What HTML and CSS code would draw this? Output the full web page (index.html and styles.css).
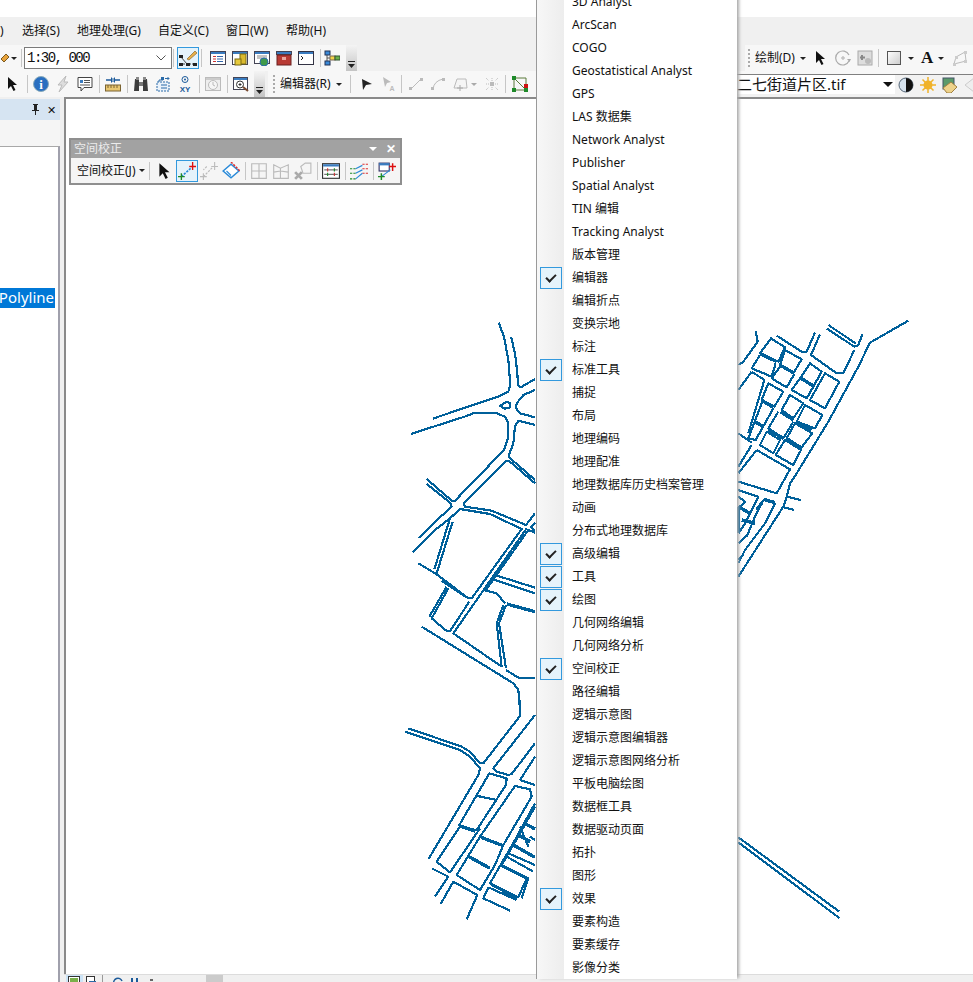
FILE: index.html
```html
<!DOCTYPE html>
<html lang="zh">
<head>
<meta charset="utf-8">
<title>ArcMap</title>
<link rel="stylesheet" href="styles.css">
</head>
<body>
<div class="app">
  <div class="topstrip"></div>
  <nav class="menubar">
    <span class="m0">)</span><span class="m1">选择(S)</span><span class="m2">地理处理(G)</span><span class="m3">自定义(C)</span><span class="m4">窗口(W)</span><span class="m5">帮助(H)</span>
  </nav>

  <div class="band">
    <div class="group g1">
      <svg class="ic cut" viewBox="6 0 11 16"><path d="M7 9l5-5 3 3-5 5z" fill="#e8a33c" stroke="#7a5a20"/></svg>
      <i class="caret c-a"></i>
      <i class="sep s-a"></i>
      <div class="combo scale"><span>1:30, 000</span><svg viewBox="0 0 10 6" class="chev"><path d="M.5.5L5 5 9.500.5" fill="none" stroke="#555"/></svg></div>
      <i class="sep s-b"></i>
      <span class="btn on"><svg class="ic big" viewBox="0 0 20 20"><path d="M2 16h16" stroke="#444" stroke-dasharray="2 1"/><path d="M3 9l6 7" stroke="#444"/><rect x="1" y="7" width="4" height="3" fill="#222"/><rect x="1" y="15" width="4" height="3" fill="#222"/><rect x="8" y="15" width="4" height="3" fill="#222"/><rect x="15" y="15" width="4" height="3" fill="#222"/><path d="M9 11l8-8 2 2-8 7z" fill="#e8b04a" stroke="#8a6a30" stroke-width=".7"/></svg></span>
      <i class="sep s-c"></i>
      <span class="btn"><svg class="ic" viewBox="0 0 16 16"><rect x=".5" y="1.500" width="15" height="13" fill="#fff" stroke="#445"/><rect x="1" y="2" width="14" height="2" fill="#3a7cc0"/><path d="M3 6.500h3M3 9h3M3 11.500h3" stroke="#c33"/><path d="M7 6.500h6M7 9h6M7 11.500h6" stroke="#36a"/></svg></span>
      <span class="btn"><svg class="ic" viewBox="0 0 16 16"><rect x=".5" y="1.500" width="15" height="13" fill="#fff" stroke="#445"/><rect x="1" y="2" width="14" height="2" fill="#3a7cc0"/><rect x="8" y="4" width="6" height="10" fill="#d9b92e" stroke="#7a6a10"/><rect x="3" y="9" width="6" height="6" fill="#e6c93c" stroke="#7a6a10"/></svg></span>
      <span class="btn"><svg class="ic" viewBox="0 0 16 16"><rect x=".5" y="1.500" width="15" height="12" fill="#fff" stroke="#445"/><rect x="1" y="2" width="14" height="2" fill="#3a7cc0"/><path d="M3 6h10M3 8h10" stroke="#888"/><circle cx="10" cy="12" r="4" fill="#3f9a4a" stroke="#2a6aa8"/></svg></span>
      <span class="btn"><svg class="ic" viewBox="0 0 16 16"><rect x=".5" y="1.500" width="15" height="3" fill="#3a7cc0" stroke="#445"/><rect x="1" y="5" width="14" height="10" fill="#b83a34" stroke="#6a2020"/><path d="M6 7h4v3H6z" fill="#e9a8a0"/></svg></span>
      <span class="btn"><svg class="ic" viewBox="0 0 16 16"><rect x=".5" y="1.500" width="15" height="13" fill="#fff" stroke="#334"/><rect x="1" y="2" width="14" height="2" fill="#3a7cc0"/><path d="M3 6l2 2-2 2" fill="none" stroke="#222"/></svg></span>
      <i class="sep s-d"></i>
      <span class="btn"><svg class="ic" viewBox="0 0 16 16"><path d="M3 4v9M3 8h6M11 8h2" stroke="#555"/><rect x="1" y="1" width="5" height="4" fill="#3a8ad8" stroke="#235"/><rect x="1" y="11" width="5" height="4" fill="#3a8ad8" stroke="#235"/><rect x="6" y="6" width="5" height="4" fill="#f3d34a" stroke="#765"/><rect x="11" y="6" width="5" height="4" fill="#6ab04a" stroke="#353"/></svg></span>
      <span class="more"><svg viewBox="0 0 7 7"><path d="M0 .5h7" stroke="#222"/><path d="M0 3h7L3.500 7z" fill="#222"/></svg></span>
    </div>
    <div class="group g2">
      <i class="grip"></i>
      <span class="lbl">绘制(D)</span><i class="caret c-b"></i>
      <span class="btn nar"><svg class="ic" viewBox="0 0 16 16"><path d="M3 1v12l3-3 2.500 5 2-1-2.500-5h4z" fill="#111"/></svg></span>
      <span class="btn nar"><svg class="ic" viewBox="0 0 16 16"><path d="M14 11A7 7 0 1 1 14 5" fill="none" stroke="#aaa" stroke-width="1.200"/><circle cx="8" cy="8" r="1.200" fill="none" stroke="#aaa"/><path d="M12 9l2.500 3 1.500-3z" fill="#aaa"/></svg></span>
      <span class="btn nar"><svg class="ic" viewBox="0 0 16 16"><rect x="1" y="1" width="14" height="14" fill="#ddd" stroke="#aaa"/><path d="M5 5v5M3 7.500h5" stroke="#888" stroke-width="2"/><circle cx="11" cy="11" r="3" fill="#bbb"/></svg></span>
      <i class="sep s-e"></i>
      <svg class="ic rect-ic" viewBox="0 0 14 14"><rect x=".5" y=".5" width="13" height="13" fill="url(#gr)" stroke="#555"/><defs><linearGradient id="gr" x2="1" y2="1"><stop offset="0" stop-color="#fff"/><stop offset="1" stop-color="#ccc"/></linearGradient></defs></svg>
      <i class="caret c-c"></i>
      <span class="bigA">A</span>
      <i class="caret c-d"></i>
      <svg class="ic poly-ic" viewBox="0 0 16 16"><path d="M2 14l2-7 9-5 1 9z" fill="none" stroke="#bbb"/><path d="M1 13h3v3H1zM3 6h3v3H3zM12 1h3v3h-3zM12 10h3v3h-3z" fill="#ccc"/></svg>
      <i class="sep s-h"></i>
    </div>
  </div>

  <div class="band">
    <div class="group g3">
      <span class="btn start"><svg class="ic" viewBox="0 0 16 16"><path d="M3 1v12l3-3 2.500 5 2-1-2.500-5h4z" fill="#111"/></svg></span>
      <i class="sep"></i>
      <span class="btn"><svg class="ic" viewBox="0 0 16 16"><circle cx="8" cy="8" r="7.500" fill="#2a6fc0" stroke="#8ab"/><text x="8" y="12.500" class="info">i</text></svg></span>
      <span class="btn"><svg class="ic" viewBox="0 0 16 16"><path d="M11 0L3 9h4l-3 7 9-10H9z" fill="#ddd" stroke="#bbb"/></svg></span>
      <span class="btn"><svg class="ic" viewBox="0 0 16 16"><path d="M1 1.500h14v10H7l-3 3.500v-3.500H1z" fill="#fff" stroke="#444"/><path d="M3 4h3v3H3z" fill="#3a7cc0"/><path d="M7 4.500h6M7 6.500h6M3 9h10" stroke="#555"/></svg></span>
      <i class="sep"></i>
      <span class="btn"><svg class="ic" viewBox="0 0 16 16"><path d="M1 4h5M10 4h5" stroke="#1c5a9a" stroke-width="1.500"/><path d="M6 1v6L9 4zM10 1v6L7 4z" fill="#1c5a9a"/><rect x=".5" y="9" width="15" height="6" fill="#e8c670" stroke="#7a6330"/><path d="M3 9v3M6 9v3M9 9v3M12 9v3" stroke="#7a6330"/></svg></span>
      <i class="sep"></i>
      <span class="btn"><svg class="ic" viewBox="0 0 16 16"><path d="M2 3h4v12H1zM10 3h4l1 12h-5z" fill="#3c3c3c"/><path d="M6 6h4v4H6z" fill="#777"/><rect x="3" y="1" width="3" height="3" fill="#888"/><rect x="10" y="1" width="3" height="3" fill="#888"/></svg></span>
      <span class="btn"><svg class="ic" viewBox="0 0 16 16"><path d="M8 4h-4v3M4 12h2" fill="none" stroke="#2a6aa8"/><rect x="6" y="1" width="3" height="3" fill="#2a6aa8"/><path d="M10 2.500h4l-1.500-1.500M14 2.500L12.500 4" fill="none" stroke="#2a6aa8"/><rect x="2" y="6" width="12" height="9" fill="#eaf2fa" stroke="#2a6aa8" stroke-dasharray="2 1"/><path d="M6 9h6M6 12h6" stroke="#2a6aa8"/></svg></span>
      <span class="btn"><svg class="ic" viewBox="0 0 16 16"><circle cx="8" cy="3.500" r="3" fill="none" stroke="#1c5a9a"/><circle cx="8" cy="3.500" r="1" fill="#1c5a9a"/><text x="8" y="15.500" class="xy">XY</text></svg></span>
      <i class="sep"></i>
      <span class="btn"><svg class="ic" viewBox="0 0 16 16"><rect x=".5" y="1.500" width="15" height="13" fill="#eee" stroke="#bbb"/><rect x="1" y="2" width="14" height="2" fill="#ccc"/><circle cx="8" cy="9" r="4.500" fill="#f5f5f5" stroke="#bbb"/><path d="M8 6v3l2 1" fill="none" stroke="#bbb"/></svg></span>
      <i class="sep"></i>
      <span class="btn"><svg class="ic" viewBox="0 0 16 16"><rect x=".5" y="1.500" width="14" height="12" fill="#fff" stroke="#445"/><rect x="1" y="2" width="13" height="2" fill="#3a7cc0"/><circle cx="7" cy="8.500" r="3.500" fill="#fff" stroke="#333"/><path d="M5.500 8.500h3M7 7v3" stroke="#333"/><path d="M10 11l5 4" stroke="#7a4a30" stroke-width="2"/></svg></span>
      <span class="more"><svg viewBox="0 0 7 7"><path d="M0 .5h7" stroke="#222"/><path d="M0 3h7L3.500 7z" fill="#222"/></svg></span>
    </div>
    <div class="group g4">
      <i class="grip"></i>
      <span class="lbl">编辑器(R)</span><i class="caret c-b"></i>
      <i class="sep s-f"></i>
      <span class="btn"><svg class="ic" viewBox="0 0 16 16"><path d="M4 3l10 5-6 1-3 5z" fill="#222"/></svg></span>
      <span class="btn"><svg class="ic" viewBox="0 0 16 16"><path d="M3 1l8 5-4 1-2 4z" fill="#bbb"/><text x="12" y="15" class="dimA">A</text></svg></span>
      <i class="sep"></i>
      <span class="btn"><svg class="ic" viewBox="0 0 16 16"><path d="M3 13L13 3" stroke="#bbb"/><rect x="1" y="11" width="3" height="3" fill="#bbb"/><rect x="12" y="2" width="3" height="3" fill="#bbb"/></svg></span>
      <span class="btn"><svg class="ic" viewBox="0 0 16 16"><path d="M3 13Q4 5 13 3" fill="none" stroke="#bbb"/><rect x="1" y="11" width="3" height="3" fill="#bbb"/><rect x="12" y="2" width="3" height="3" fill="#bbb"/></svg></span>
      <span class="btn"><svg class="ic" viewBox="0 0 16 16"><path d="M2 12l3-9h9l1 9z" fill="#f5f5f5" stroke="#bbb"/><path d="M8 9v6M5 12h6" stroke="#aaa"/></svg></span>
      <i class="caret dim"></i>
      <span class="btn"><svg class="ic" viewBox="0 0 16 16"><path d="M2 2l3 3M14 2l-3 3M2 14l3-3M14 14l-3-3M2 8h3M11 8h3M8 2v3M8 11v3" stroke="#bbb" stroke-dasharray="1 1"/><rect x="6" y="6" width="4" height="4" fill="#bbb"/></svg></span>
      <i class="sep"></i>
      <span class="btn"><svg class="ic" viewBox="0 0 16 16"><path d="M2 2v12h12zM2 2h12v12" fill="none" stroke="#5a7a3a"/><rect x="0" y="0" width="4" height="4" fill="#1f8a2a"/><rect x="0" y="12" width="4" height="4" fill="#1f8a2a"/><rect x="12" y="12" width="4" height="4" fill="#1f8a2a"/><rect x="12" y="8" width="4" height="4" fill="#c11"/></svg></span>
      <div class="geo">
        <div class="combo file"><span>二七街道片区.tif</span><i class="drop"></i></div>
        <span class="btn"><svg class="ic" viewBox="0 0 16 16"><circle cx="8" cy="8" r="7" fill="#d6e2ee" stroke="#567"/><path d="M8 1a7 7 0 0 1 0 14z" fill="#111"/></svg></span>
        <span class="btn"><svg class="ic" viewBox="0 0 16 16"><circle cx="8" cy="8" r="4.500" fill="#f0b32a"/><path d="M8 0v16M0 8h16M2.500 2.500l11 11M13.500 2.500l-11 11" stroke="#f0b32a" stroke-width="1.500"/></svg></span>
        <span class="btn"><svg class="ic" viewBox="0 0 16 16"><rect x="1" y="1" width="11" height="11" fill="#5a9a6a" stroke="#456"/><path d="M5 16l-4-5 8-6 6 5-6 6z" fill="#eed28a" stroke="#a08040"/></svg></span>
        <span class="btn"><svg class="ic" viewBox="0 0 16 16"><path d="M1 8l9-7v14z" fill="#eee" stroke="#ccc"/></svg></span>
      </div>
    </div>
  </div>

  <main class="main">
    <aside class="panel">
      <div class="p-head"><svg class="pin" viewBox="0 0 9 11"><path d="M2 0h5v1H6v5h2v1H5v4H4V7H1V6h2V1H2z" fill="#222"/></svg><span class="p-x">✕</span></div>
      <div class="p-tabs"></div>
      <div class="tree"><div class="sel">Polyline</div></div>
    </aside>
    <div class="view">
      <svg class="map" viewBox="66 99 907 875">
        <g transform="translate(400 310) scale(.33333)">
          <path d="M296 38L312 80 325 150 331 225 325 245 300 258 190 295 98 326"/>
          <path d="M333 80L345 130 352 190 354 225 362 232 405 207"/>
          <path d="M32 372L200 318 225 308 290 310 315 320 325 340 325 380 312 420 165 572 155 572 80 507"/>
          <path d="M80 522L150 578 155 590 100 640 57 684"/>
          <path d="M38 728L105 660 150 625 180 597 270 612 365 657 215 865 205 865 110 793 55 760"/>
          <path d="M190 580L318 452 330 455 405 520"/>
          <path d="M325 440L405 510"/>
          <path d="M190 580L195 590 275 602 378 645 405 610"/>
          <path d="M110 790L158 635"/>
          <path d="M103 778L150 625"/>
          <path d="M125 813L200 862"/>
          <path d="M140 830L88 920"/>
          <path d="M145 835L95 925 140 963 150 963 208 875"/>
          <path d="M65 950L340 1120 355 1140 360 1200"/>
          <path d="M405 638L393 650 400 660 405 660"/>
          <path d="M380 655L160 970 305 1070"/>
          <path d="M405 668L385 660 265 830 258 842 290 850 315 880"/>
          <path d="M285 795L405 833"/>
          <path d="M278 808L405 850"/>
          <path class="thick" d="M320 882L405 905"/>
          <path d="M318 885L297 940 318 1075"/>
          <path d="M310 885L290 940 305 1070"/>
          <path d="M318 1080L355 1103 405 1103"/>
          <path d="M300 288L320 275 330 280 330 292 315 296z"/>
          <path d="M405 240L370 255 350 280 348 295 360 310 405 322"/>
          <path d="M405 345L355 332 345 350 340 400 325 440"/>
        </g>
        <g transform="translate(400 700) scale(.33333)">
          <path d="M360 0L360 48 250 190 240 190 210 155 185 140 25 85"/>
          <path d="M15 95L180 150 210 170 240 205 235 225 85 478"/>
          <path d="M405 45L280 205 290 215 325 225 335 222 405 130"/>
          <path d="M268 220L320 235 318 255 230 390 215 388 178 375z"/>
          <path d="M228 287L290 300"/>
          <path class="thick" d="M178 378L225 393"/>
          <path d="M178 382L110 485 150 517 240 385"/>
          <path d="M360 240L405 170"/>
          <path d="M360 240L405 255"/>
          <path d="M345 258L390 268 395 290 310 435 285 495 240 570 170 525 240 410z"/>
          <path class="thick" d="M243 412L312 438"/>
          <path class="thick" d="M207 470L270 505"/>
          <path d="M95 505L145 530 105 590"/>
          <path d="M160 545L122 612"/>
          <path d="M160 545L232 585 200 658"/>
          <path d="M405 310L345 420 270 550 355 592 380 535"/>
          <path d="M405 320L360 400 305 495 385 535 365 595"/>
          <path d="M265 562L350 600"/>
          <path d="M275 555L350 595"/>
          <path d="M265 562L250 595 330 632"/>
          <path class="thick" d="M305 497L382 535"/>
          <path d="M320 470L400 515"/>
          <path d="M325 460L405 495"/>
          <path class="thick" d="M340 435L405 472"/>
          <path class="thick" d="M355 405L390 425"/>
          <path class="thick" d="M370 368L405 387"/>
          <path d="M360 380L385 440"/>
          <path d="M390 410L405 420"/>
        </g>
        <g transform="translate(735 310) scale(.33333)">
          <path d="M520 32L405 98 370 170 280 335 185 490 165 520 155 560 145 590 10 800"/>
          <path d="M280 45L362 100"/>
          <path d="M276 56L358 110 370 105 382 73"/>
          <path d="M358 120L325 190 305 190 228 135 255 73"/>
          <path d="M125 77L200 125 215 125 240 68"/>
          <path d="M108 85L150 112 130 155 75 130z"/>
          <path class="thick" d="M78 132L125 155"/>
          <path d="M75 135L50 175 110 200 122 160"/>
          <path d="M150 120L200 148 175 190 135 165z"/>
          <path class="thick" d="M135 165L178 190"/>
          <path d="M135 170L110 205 155 232 178 192"/>
          <path d="M100 220L145 245 118 290 80 270z"/>
          <path class="thick" d="M82 272L115 292"/>
          <path d="M82 275L40 385 62 390 115 295"/>
          <path class="thick" d="M60 335L85 350"/>
          <path d="M50 185L88 210 40 370"/>
          <path d="M50 185L10 240"/>
          <path d="M10 370L50 398"/>
          <path d="M10 470L50 405"/>
          <path d="M62 62L68 95 25 155 10 165"/>
          <path d="M225 160L260 185 235 230 195 205z"/>
          <path class="thick" d="M195 202L235 228"/>
          <path d="M195 205L170 240 215 265 235 230"/>
          <path d="M270 190L313 215 270 295 225 270z"/>
          <path d="M165 255L205 280 175 325 140 300z"/>
          <path class="thick" d="M137 305L175 330"/>
          <path d="M130 305L100 355 145 385 175 335"/>
          <path class="thick" d="M100 360L145 385"/>
          <path d="M210 285L262 315 240 355 185 335z"/>
          <path class="thick" d="M185 335L230 360"/>
          <path d="M180 340L232 370 200 412 155 385z"/>
          <path class="thick" d="M155 385L200 415"/>
          <path d="M150 390L198 420 175 465 122 435z"/>
          <path d="M95 365L135 390 115 430 75 405z"/>
          <path d="M65 420L165 478 125 550 10 515"/>
          <path d="M65 420L10 490"/>
          <path d="M155 560L197 570"/>
          <path d="M140 590L178 600"/>
          <path d="M10 540L70 560 30 640 10 670"/>
          <path class="thick" d="M85 568L120 578"/>
          <path d="M85 570L60 620 35 680"/>
          <path d="M122 578L90 640 30 720 10 760"/>
          <path class="thick" d="M10 590L10 670"/>
          <path class="thick" d="M10 590L45 610"/>
          <path class="thick" d="M20 630L60 640"/>
          <path class="thick" d="M65 600L80 580"/>
          <path d="M10 560L30 575 15 590"/>
          <path d="M10 700L40 670"/>
          <path d="M10 750L25 735"/>
        </g>
        <g transform="translate(735 825) scale(.33333)">
          <path d="M10 37L313 260"/>
          <path d="M10 52L313 279"/>
        </g>
      </svg>
      <div class="status">
        <span class="st on"><svg class="ic sm" viewBox="0 0 12 12"><rect x=".5" y=".5" width="11" height="11" fill="#fff" stroke="#333"/><rect x="2" y="2" width="8" height="8" fill="#7ab04a"/></svg></span>
        <span class="st"><svg class="ic sm" viewBox="0 0 12 12"><rect x="1.500" y=".5" width="8" height="11" fill="#fff" stroke="#333"/><rect x="4" y="5" width="7" height="6" fill="#2a6aa8"/></svg></span>
        <i class="sep st-sep"></i>
        <svg class="ic sm st1" viewBox="0 0 12 12"><path d="M2 8a4 4 0 0 1 8-3" fill="none" stroke="#1c5a9a" stroke-width="1.500"/></svg>
        <svg class="ic sm st2" viewBox="0 0 12 12"><path d="M3 2v9M8 2v9" stroke="#1c5a9a" stroke-width="2"/></svg>
        <i class="tick"></i>
        <i class="thumb"></i>
      </div>
    </div>
  </main>

  <section class="float">
    <header class="f-title"><span>空间校正</span><i class="f-drop"></i><b class="f-x">✕</b></header>
    <div class="f-bar">
      <span class="lbl">空间校正(J)</span><i class="caret c-e"></i>
      <i class="sep s-g"></i>
      <span class="btn"><svg class="ic" viewBox="0 0 16 16"><path d="M3 1v12l3-3 2.500 5 2-1-2.500-5h4z" fill="#111"/></svg></span>
      <span class="btn on"><svg class="ic" viewBox="0 0 16 16"><path d="M3 13L12 5" stroke="#2a8ad8" stroke-width="1.500" stroke-dasharray="2 1"/><path d="M0 13h6M3 10v6" stroke="#1f8a2a" stroke-width="1.200"/><path d="M10 4h6M13 0v7" stroke="#d11" stroke-width="1.200"/></svg></span>
      <span class="btn"><svg class="ic" viewBox="0 0 16 16"><path d="M3 13L11 5M6 4l-3 3" stroke="#bbb" stroke-dasharray="2 1"/><path d="M0 13h6M3 10v6M10 4h6M13 0v7" stroke="#bbb"/></svg></span>
      <span class="btn"><svg class="ic" viewBox="0 0 16 16"><path d="M1 8l7-6 7 6-7 6z" fill="#fff" stroke="#2a8ad8" stroke-width="1.300"/><path d="M8 0l8 8" stroke="#d33" stroke-width="1.300" stroke-dasharray="2 1"/><path d="M4 8l4 4" stroke="#2a8ad8"/></svg></span>
      <i class="sep"></i>
      <span class="btn"><svg class="ic" viewBox="0 0 16 16"><path d="M1.500 1.500h13v13h-13zM8 1.500v13M1.500 8h13" fill="none" stroke="#bbb"/></svg></span>
      <span class="btn"><svg class="ic" viewBox="0 0 16 16"><path d="M1.500 2.500l6 3 7-3v12h-13zM7.500 5.500v9M1.500 9l6-1 7 1" fill="none" stroke="#bbb"/></svg></span>
      <span class="btn"><svg class="ic" viewBox="0 0 16 16"><path d="M6 4l4-3h5v9H8z" fill="none" stroke="#bbb"/><path d="M1 9l6 6M7 9l-6 6" stroke="#aaa" stroke-width="2.500"/></svg></span>
      <i class="sep"></i>
      <span class="btn"><svg class="ic" viewBox="0 0 16 16"><rect x=".5" y="1.500" width="15" height="13" fill="#fff" stroke="#333"/><rect x="1" y="2" width="14" height="2" fill="#3a7cc0"/><path d="M2 7h12M2 11h12" stroke="#777"/><path d="M5 5.500v3M11 9.500v3" stroke="#c33"/><path d="M5 9.500v3M11 5.500v3" stroke="#1f8a2a"/></svg></span>
      <i class="sep"></i>
      <span class="btn"><svg class="ic" viewBox="0 0 16 16"><path d="M0 6h5M0 10h5M0 15h5" stroke="#1f8a2a" stroke-dasharray="2 1"/><path d="M11 2h5M11 6h5M11 10h5" stroke="#d33" stroke-dasharray="2 1"/><path d="M5 6l6-3M5 10l6-3M5 15l6-5" stroke="#2a8ad8"/></svg></span>
      <i class="sep"></i>
      <span class="btn"><svg class="ic" viewBox="0 0 16 16"><rect x="1" y="1" width="9" height="7" fill="#fff" stroke="#336"/><rect x="1" y="1" width="9" height="2" fill="#3a7cc0"/><path d="M3 13L11 7" stroke="#2a8ad8"/><path d="M0 13h6M3 10v6" stroke="#1f8a2a" stroke-width="1.300"/><path d="M10 4h6M13 1v7" stroke="#d11" stroke-width="1.300"/></svg></span>
    </div>
  </section>

  <ul class="menu">
    <li>3D Analyst</li><li>ArcScan</li><li>COGO</li><li>Geostatistical Analyst</li><li>GPS</li><li>LAS 数据集</li><li>Network Analyst</li><li>Publisher</li><li>Spatial Analyst</li><li>TIN 编辑</li><li>Tracking Analyst</li><li>版本管理</li>
    <li class="chk">编辑器</li><li>编辑折点</li><li>变换宗地</li><li>标注</li><li class="chk">标准工具</li><li>捕捉</li><li>布局</li><li>地理编码</li><li>地理配准</li><li>地理数据库历史档案管理</li><li>动画</li><li>分布式地理数据库</li>
    <li class="chk">高级编辑</li><li class="chk">工具</li><li class="chk">绘图</li><li>几何网络编辑</li><li>几何网络分析</li><li class="chk">空间校正</li><li>路径编辑</li><li>逻辑示意图</li><li>逻辑示意图编辑器</li><li>逻辑示意图网络分析</li><li>平板电脑绘图</li><li>数据框工具</li><li>数据驱动页面</li><li>拓扑</li><li>图形</li><li class="chk">效果</li><li>要素构造</li><li>要素缓存</li><li>影像分类</li>
  </ul>
</div>
</body>
</html>
```
FILE: styles.css
```css
* { box-sizing: border-box; }
html, body { margin: 0; padding: 0; background: #fff; }
body { font: 12px/1 "Noto Sans", "Noto Sans CJK SC", sans-serif; color: #111; overflow: hidden; }
i { display: block; font-style: normal; }

.app { position: relative; width: 973px; height: 982px; overflow: hidden; display: flex; flex-direction: column; }
.topstrip { height: 17px; background: #fff; }

.menubar { height: 28px; background: #f0f0f0; display: flex; align-items: center; white-space: nowrap; }
.m0 { width: 22px; }
.m1 { width: 55px; }
.m2 { width: 81px; }
.m3 { width: 68px; }
.m4 { width: 60px; }

.band { height: 26px; background: #f0f0f0; display: flex; justify-content: space-between; overflow: hidden; }
.group { height: 26px; background: #f7f7f7; display: flex; align-items: center; flex: none; }
.g1 { width: 357px; }
.g2 { width: 228px; padding-left: 3px; }
.g3 { width: 265px; margin-right: 3px; }
.g4 { width: 715px; padding-left: 5px; }

.ic { width: 16px; height: 16px; display: block; flex: none; }
.ic.big { width: 20px; height: 20px; }
.ic.sm { width: 12px; height: 12px; }
.cut { width: 11px; }
.btn { width: 22px; height: 24px; display: flex; align-items: center; justify-content: center; flex: none; }
.btn.on { height: 22px; border: 1px solid #3399dd; background: #e5f3fb; }
.btn.nar { width: 22px; }
.btn.start { margin-left: 2px; }
.sep { width: 1px; height: 18px; background: #c6c6c6; margin: 0 2.500px; flex: none; }
.s-a { margin: 0 2px 0 4px; }
.s-b { margin: 0 3px 0 1px; }
.s-c { margin: 0 5px 0 2px; }
.s-d { margin: 0 0 0 3px; }
.s-e { margin: 0 2px 0 2px; }
.s-f { margin: 0 4px; }
.s-g { margin: 0 4px 0 4px; }
.s-h { margin: 0 0 0 5px; }
.caret { width: 0; height: 0; border: 3px solid transparent; border-top: 3px solid #222; border-bottom: 0; margin-left: 3px; flex: none; }
.caret.dim { border-top-color: #aaa; margin: 0 4px 0 0; }
.c-a { margin-left: 0; }
.c-b { margin: 0 4px 0 5px; }
.c-c { margin: 0 7px; }
.c-d { margin: 0 5px 0 4px; }
.c-e { margin-left: 4px; }
.more { width: 11px; height: 26px; background: linear-gradient(#f4f4f4, #c4c4c4); display: flex; align-items: flex-end; justify-content: center; padding-bottom: 3px; margin-left: auto; flex: none; }
.more svg { width: 7px; height: 7px; display: block; }
.grip { width: 2px; height: 18px; margin-right: 5px; flex: none; background: repeating-linear-gradient(#aaa 0 2px, transparent 2px 4px); }
.lbl { white-space: nowrap; flex: none; }

.combo { display: flex; align-items: center; background: #fff; flex: none; }
.scale { width: 148px; height: 22px; border: 1px solid #7a7a7a; padding: 0 5px 0 2px; justify-content: space-between; font: 14px "Liberation Mono", monospace; letter-spacing: -1.500px; }
.chev { width: 10px; height: 6px; display: block; }
.geo { margin-left: auto; align-self: flex-end; height: 23px; width: 246px; flex: none; display: flex; align-items: flex-start; border-top: 1px solid #808080; background: #f2f2f2; }
.geo .btn { height: 20px; }
.file { width: 158px; height: 19px; font-size: 15px; white-space: nowrap; overflow: hidden; justify-content: space-between; padding-right: 2px; }
.drop { width: 0; height: 0; border: 5px solid transparent; border-top: 5px solid #111; border-bottom: 0; flex: none; }
.rect-ic { width: 14px; height: 14px; margin-left: 6px; }
.poly-ic { margin-left: 3px; }
.bigA { font: 700 17px "Liberation Serif", serif; width: 13px; flex: none; }
.info { font: 700 13px "Liberation Serif", serif; fill: #fff; text-anchor: middle; }
.xy { font: 700 8px "Liberation Sans", sans-serif; fill: #1c5a9a; text-anchor: middle; }
.dimA { font: 700 7px "Liberation Sans", sans-serif; fill: #bbb; text-anchor: middle; }

.main { height: 885px; display: flex; background: #f0f0f0; }
.panel { width: 60px; flex: none; display: flex; flex-direction: column; padding-top: 2px; }
.p-head { height: 21px; background: #d6e4f2; display: flex; align-items: center; justify-content: flex-end; padding-right: 4px; gap: 7px; }
.pin { width: 9px; height: 11px; display: block; }
.p-x { font-size: 11px; }
.p-tabs { height: 26px; background: #f5f5f5; }
.tree { flex: 1; background: #fff; border-top: 1px solid #a8a8a8; border-right: 2px solid #a0a0ac; padding-top: 141px; }
.sel { width: 55px; height: 20px; background: #0078d7; color: #fff; font-size: 15px; line-height: 19px; text-align: right; padding-right: 1px; overflow: hidden; white-space: nowrap; direction: rtl; }

.view { width: 913px; display: flex; flex-direction: column; flex: none; }
.map { width: 909px; height: 877px; display: block; background: #fff; border-left: 2px solid #8a8a8a; border-top: 2px solid #8a8a8a; margin-left: 4px; overflow: hidden; flex: none; }
.map path { fill: none; stroke: #00609a; stroke-width: 6.500; shape-rendering: crispEdges; stroke-linejoin: round; }
.map path.thick { stroke-width: 10; }

.status { height: 8px; margin-left: 4px; border-top: 1px solid #dcdcdc; background: #f0f0f0; display: flex; align-items: flex-start; overflow: hidden; padding-left: 2px; }
.st { width: 17px; height: 12px; flex: none; padding: 1px 2px; }
.st.on { background: #cce4f7; }
.st-sep { height: 8px; margin: 0 0 0 2px; background: #999; }
.st1 { margin-left: 9px; margin-top: 1px; }
.st2 { margin-left: 5px; margin-top: 1px; }
.tick { width: 3px; height: 2px; background: #666; margin: 4px 0 0 9px; flex: none; }
.thumb { width: 17px; height: 7px; background: #cbcbcb; margin-left: 53px; flex: none; }

.float { position: absolute; left: 69px; top: 138px; width: 333px; height: 47px; background: #8f8f8f; padding: 2px; display: flex; flex-direction: column; }
.f-title { height: 18px; background: #a2a2a2; color: #ececec; font-size: 12px; display: flex; align-items: center; padding-left: 3px; flex: none; }
.f-drop { width: 0; height: 0; border: 4px solid transparent; border-top: 4px solid #fff; border-bottom: 0; margin-left: auto; }
.f-x { color: #fff; font-size: 12px; margin: 0 4px 0 9px; }
.f-bar { flex: 1; background: #f5f5f5; display: flex; align-items: center; padding-left: 6px; }
.f-bar .btn:not(.on) .ic, .f-bar .btn.on .ic { width: 18px; height: 18px; }

.menu { position: absolute; left: 536px; top: -10px; width: 201px; margin: 0; padding: 0; list-style: none; border-left: 1px solid #9a9a9a; background: linear-gradient(90deg, #f7f7f7, #ededed 27px, #fff 27px); box-shadow: 3px 0 3px -1px #a8a8a8; }
.menu li { height: 23px; line-height: 23px; padding-left: 35px; position: relative; white-space: nowrap; }
.menu li.chk::before { content: ""; position: absolute; left: 3px; top: 1px; width: 20px; height: 20px; border: 1px solid #3399dd; background: #e5f3fb; }
.menu li.chk::after { content: ""; position: absolute; left: 9px; top: 8px; width: 8px; height: 4px; border-left: 2px solid #222; border-bottom: 2px solid #222; transform: rotate(-45deg); }
```
